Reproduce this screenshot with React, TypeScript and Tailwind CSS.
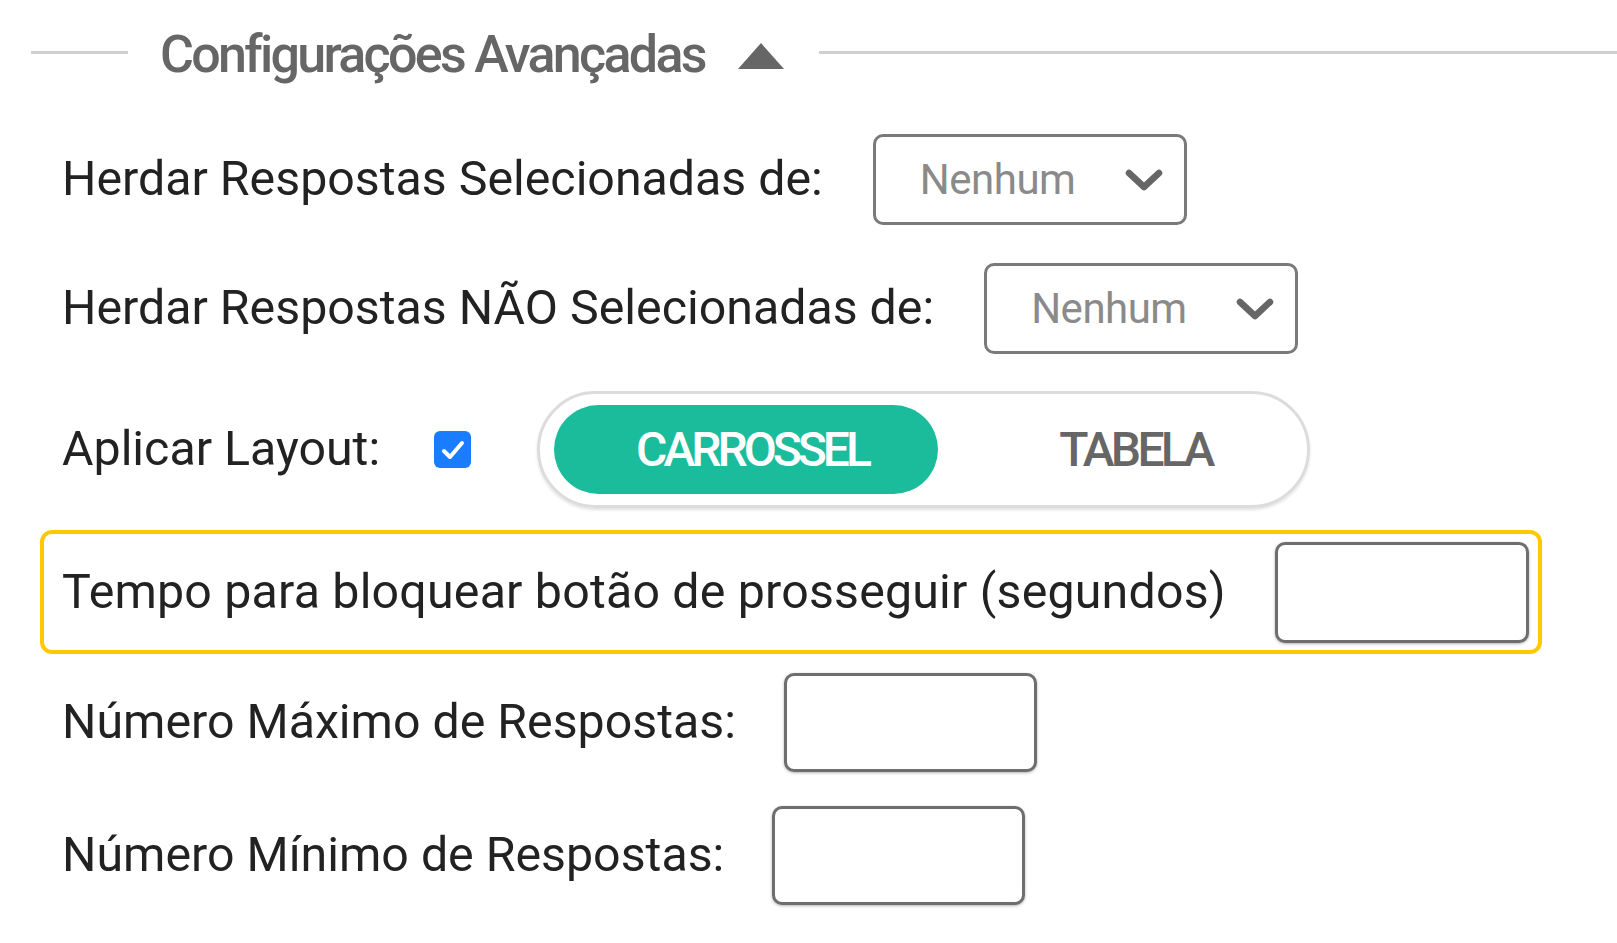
import React from "react";

const Chevron = () => (
  <svg width="40" height="26" viewBox="0 0 40 26" className="shrink-0">
    <path d="M5 6 L20 20 L35 6" fill="none" stroke="#666" strokeWidth="6.5" strokeLinecap="round" strokeLinejoin="round" />
  </svg>
);

const Select = ({ className = "" }: { className?: string }) => (
  <div className={`w-[314px] h-[91px] border-[3px] border-[#7a7a7a] rounded-[10px] flex items-center justify-between pl-[44px] pr-[20px] bg-white shrink-0 ${className}`}>
    <span className="text-[42px] text-[#8a8a8a] font-['Roboto',sans-serif] leading-none tracking-[-0.5px]">Nenhum</span>
    <Chevron />
  </div>
);

const Input = ({ w = "w-[253px]", h = "h-[99px]" }: { w?: string; h?: string }) => (
  <div className={`${w} ${h} border-[3px] border-[#6e6e6e] rounded-[10px] bg-white shrink-0 shadow-[0_1px_3px_rgba(0,0,0,0.3)]`} />
);

export default function App() {
  return (
    <div className="w-[1617px] h-[943px] bg-white overflow-hidden font-['Roboto',sans-serif] text-[#222]">
      {/* header */}
      <div className="h-[104px] flex items-center">
        <div className="ml-[31px] w-[97px] h-[3px] bg-[#d0d0d0]" />
        <span className="ml-[32px] mt-[6px] text-[52px] leading-none text-[#666] font-medium tracking-[-2.7px] whitespace-nowrap">
          Configurações Avançadas
        </span>
        <svg width="46" height="26" viewBox="0 0 46 26" className="ml-[33px] mt-[8px] shrink-0">
          <polygon points="23,0 46,26 0,26" fill="#666" />
        </svg>
        <div className="ml-[35px] flex-1 h-[3px] bg-[#d0d0d0]" />
      </div>

      {/* row 1 */}
      <div className="mt-[30px] h-[91px] flex items-center pl-[62px]">
        <span className="text-[48.3px] leading-none whitespace-nowrap">Herdar Respostas Selecionadas de:</span>
        <Select className="ml-[50px]" />
      </div>

      {/* row 2 */}
      <div className="mt-[38px] h-[91px] flex items-center pl-[62px]">
        <span className="text-[48.3px] leading-none whitespace-nowrap">Herdar Respostas NÃO Selecionadas de:</span>
        <Select className="ml-[50px]" />
      </div>

      {/* row 3 */}
      <div className="mt-[37px] h-[117px] flex items-center pl-[62px]">
        <span className="w-[372px] text-[48.3px] leading-none whitespace-nowrap shrink-0">Aplicar Layout:</span>
        <div className="w-[37px] h-[37px] rounded-[6px] bg-[#1a7cff] flex items-center justify-center shrink-0">
          <svg width="26" height="22" viewBox="0 0 26 22">
            <path d="M4 12 L10 18 L22 4" fill="none" stroke="white" strokeWidth="4" strokeLinecap="round" strokeLinejoin="round" />
          </svg>
        </div>
        <div className="ml-[66px] w-[773px] h-[117px] rounded-full border-[3px] border-[#dcdcdc] shadow-[0_2px_3px_rgba(0,0,0,0.12)] flex items-center pl-[14px] pr-[14px] shrink-0">
          <div className="w-[384px] h-[89px] rounded-full bg-[#1abc9c] flex items-center justify-center pl-[12px]">
            <span className="text-white text-[48px] leading-none font-medium tracking-[-4px]">CARROSSEL</span>
          </div>
          <div className="flex-1 flex items-center justify-center pl-[40px]">
            <span className="text-[#666] text-[48px] leading-none font-medium tracking-[-3.7px]">TABELA</span>
          </div>
        </div>
      </div>

      {/* row 4 */}
      <div className="mt-[22px] ml-[40px] w-[1502px] h-[124px] border-[4px] border-[#ffc800] rounded-[12px] flex items-center justify-between pl-[18px] pr-[9px]">
        <span className="text-[48.3px] leading-none whitespace-nowrap tracking-[0.2px]">Tempo para bloquear botão de prosseguir (segundos)</span>
        <Input w="w-[254px]" h="h-[101px]" />
      </div>

      {/* row 5 */}
      <div className="mt-[19px] h-[99px] flex items-center pl-[62px]">
        <span className="text-[48.3px] leading-none whitespace-nowrap">Número Máximo de Respostas:</span>
        <div className="ml-[48px]"><Input /></div>
      </div>

      {/* row 6 */}
      <div className="mt-[34px] h-[99px] flex items-center pl-[62px]">
        <span className="text-[48.3px] leading-none whitespace-nowrap">Número Mínimo de Respostas:</span>
        <div className="ml-[48px]"><Input /></div>
      </div>
    </div>
  );
}
